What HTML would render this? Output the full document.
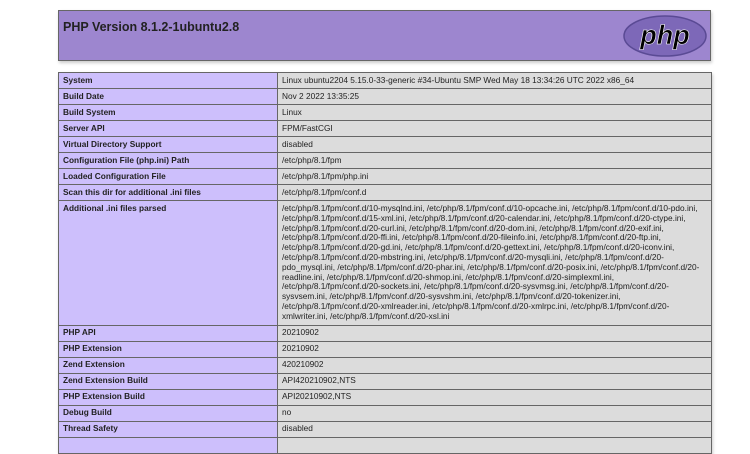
<!DOCTYPE html>
<html><head><meta charset="utf-8"><style>
body{margin:0;background:#fff;font-family:"Liberation Sans",Arial,sans-serif;width:750px;height:442px;overflow:hidden;position:relative}
.hdr{position:absolute;left:58px;top:10px;width:651px;height:49px;background:#9d86cf;border:1px solid #666;box-shadow:1px 2px 3px #ccc}
.hdr h1{margin:0;position:absolute;left:4px;top:9px;font-size:12.5px;font-weight:bold;color:#222}
table{position:absolute;left:58px;top:72px;border-collapse:collapse;width:654px;font-size:8.3px;color:#222;box-shadow:1px 2px 3px #ccc}
td{border:1px solid #666;height:15px;padding:0 4px;vertical-align:middle;line-height:9.8px}
td.e{background:#cdbffc;font-weight:bold;width:210px}
td.v{background:#dcdcdc}
td.top{vertical-align:top;padding-top:3px;padding-bottom:3px}
</style></head><body>
<div class="hdr"><h1>PHP Version 8.1.2-1ubuntu2.8</h1>
<svg style="position:absolute;left:563px;top:3px" width="86" height="44" viewBox="0 0 86 44">
<ellipse cx="43" cy="22" rx="41" ry="20" fill="#7d68b8" stroke="#5a4a94" stroke-width="1.5"/>
<text x="43" y="30" text-anchor="middle" font-family="Liberation Sans,sans-serif" font-size="27" font-style="italic" font-weight="bold" fill="#000" stroke="#fff" stroke-width="0.6">php</text>
</svg></div>
<table>
<tr><td class="e">System</td><td class="v">Linux ubuntu2204 5.15.0-33-generic #34-Ubuntu SMP Wed May 18 13:34:26 UTC 2022 x86_64</td></tr>
<tr><td class="e">Build Date</td><td class="v">Nov 2 2022 13:35:25</td></tr>
<tr><td class="e">Build System</td><td class="v">Linux</td></tr>
<tr><td class="e">Server API</td><td class="v">FPM/FastCGI</td></tr>
<tr><td class="e">Virtual Directory Support</td><td class="v">disabled</td></tr>
<tr><td class="e">Configuration File (php.ini) Path</td><td class="v">/etc/php/8.1/fpm</td></tr>
<tr><td class="e">Loaded Configuration File</td><td class="v">/etc/php/8.1/fpm/php.ini</td></tr>
<tr><td class="e">Scan this dir for additional .ini files</td><td class="v">/etc/php/8.1/fpm/conf.d</td></tr>
<tr><td class="e top">Additional .ini files parsed</td><td class="v top" style="white-space:nowrap">/etc/php/8.1/fpm/conf.d/10-mysqlnd.ini, /etc/php/8.1/fpm/conf.d/10-opcache.ini, /etc/php/8.1/fpm/conf.d/10-pdo.ini,<br>/etc/php/8.1/fpm/conf.d/15-xml.ini, /etc/php/8.1/fpm/conf.d/20-calendar.ini, /etc/php/8.1/fpm/conf.d/20-ctype.ini,<br>/etc/php/8.1/fpm/conf.d/20-curl.ini, /etc/php/8.1/fpm/conf.d/20-dom.ini, /etc/php/8.1/fpm/conf.d/20-exif.ini,<br>/etc/php/8.1/fpm/conf.d/20-ffi.ini, /etc/php/8.1/fpm/conf.d/20-fileinfo.ini, /etc/php/8.1/fpm/conf.d/20-ftp.ini,<br>/etc/php/8.1/fpm/conf.d/20-gd.ini, /etc/php/8.1/fpm/conf.d/20-gettext.ini, /etc/php/8.1/fpm/conf.d/20-iconv.ini,<br>/etc/php/8.1/fpm/conf.d/20-mbstring.ini, /etc/php/8.1/fpm/conf.d/20-mysqli.ini, /etc/php/8.1/fpm/conf.d/20-<br>pdo_mysql.ini, /etc/php/8.1/fpm/conf.d/20-phar.ini, /etc/php/8.1/fpm/conf.d/20-posix.ini, /etc/php/8.1/fpm/conf.d/20-<br>readline.ini, /etc/php/8.1/fpm/conf.d/20-shmop.ini, /etc/php/8.1/fpm/conf.d/20-simplexml.ini,<br>/etc/php/8.1/fpm/conf.d/20-sockets.ini, /etc/php/8.1/fpm/conf.d/20-sysvmsg.ini, /etc/php/8.1/fpm/conf.d/20-<br>sysvsem.ini, /etc/php/8.1/fpm/conf.d/20-sysvshm.ini, /etc/php/8.1/fpm/conf.d/20-tokenizer.ini,<br>/etc/php/8.1/fpm/conf.d/20-xmlreader.ini, /etc/php/8.1/fpm/conf.d/20-xmlrpc.ini, /etc/php/8.1/fpm/conf.d/20-<br>xmlwriter.ini, /etc/php/8.1/fpm/conf.d/20-xsl.ini</td></tr>
<tr><td class="e">PHP API</td><td class="v">20210902</td></tr>
<tr><td class="e">PHP Extension</td><td class="v">20210902</td></tr>
<tr><td class="e">Zend Extension</td><td class="v">420210902</td></tr>
<tr><td class="e">Zend Extension Build</td><td class="v">API420210902,NTS</td></tr>
<tr><td class="e">PHP Extension Build</td><td class="v">API20210902,NTS</td></tr>
<tr><td class="e">Debug Build</td><td class="v">no</td></tr>
<tr><td class="e">Thread Safety</td><td class="v">disabled</td></tr>
<tr><td class="e">&nbsp;</td><td class="v">&nbsp;</td></tr>
</table>
</body></html>
